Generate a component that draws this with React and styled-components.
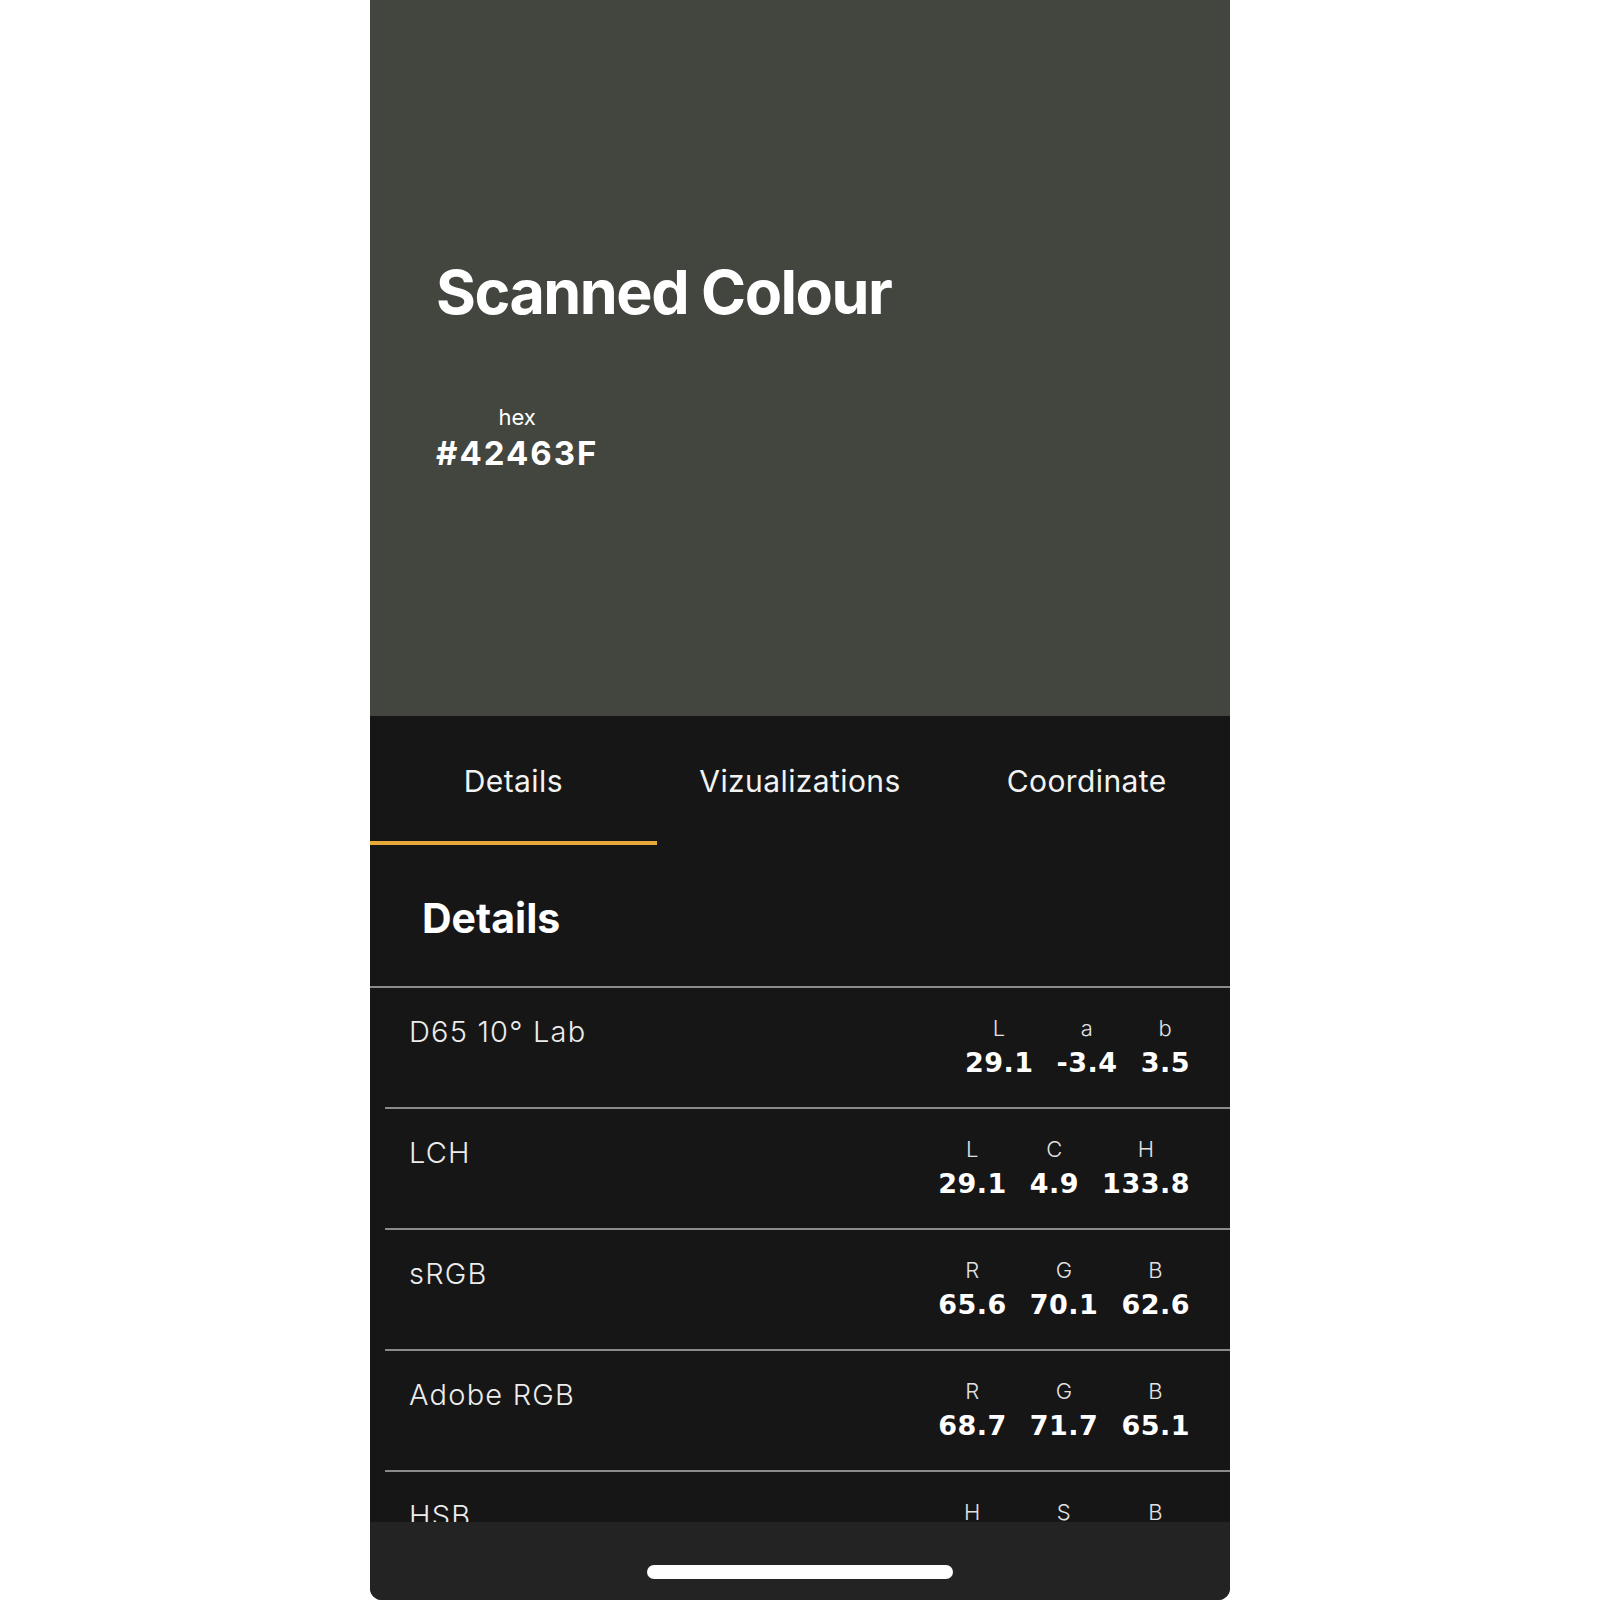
import React from "react";
import styled, { createGlobalStyle } from "styled-components";

const GlobalStyle = createGlobalStyle`
  html, body {
    margin: 0;
    padding: 0;
    background: #ffffff;
  }
  body {
    font-family: Inter, "Noto Sans", sans-serif;
    -webkit-font-smoothing: antialiased;
  }
`;

const Phone = styled.div`
  width: 860px;
  height: 1600px;
  margin: 0 auto;
  display: flex;
  flex-direction: column;
  background: #161616;
  border-radius: 0 0 12px 12px;
  overflow: hidden;
`;

const Swatch = styled.div`
  height: 716px;
  flex-shrink: 0;
  background: ${(p) => p.$colour};
  padding: 0 0 0 66px;
  box-sizing: border-box;
  display: flex;
  flex-direction: column;
  color: #ffffff;
`;

const Title = styled.h1`
  margin: 254px 0 0;
  font-size: 61px;
  font-weight: 700;
  letter-spacing: -1.5px;
  line-height: 76px;
`;

const HexBlock = styled.div`
  margin-top: 74px;
  display: flex;
  flex-direction: column;
  align-items: center;
  align-self: flex-start;
`;

const HexLabel = styled.span`
  font-size: 22px;
  font-weight: 400;
  line-height: 26px;
`;

const HexValue = styled.span`
  margin-top: 4px;
  font-size: 33px;
  font-weight: 700;
  line-height: 38px;
  letter-spacing: 2px;
`;

const Tabs = styled.div`
  display: grid;
  grid-template-columns: repeat(3, 1fr);
  height: 129px;
  flex-shrink: 0;
`;

const Tab = styled.div`
  display: flex;
  align-items: center;
  justify-content: center;
  color: #f2f2f2;
  font-size: 30px;
  font-weight: 400;
  letter-spacing: 0.4px;
  box-sizing: border-box;
  padding-top: 4px;
  border-bottom: 4px solid ${(p) => (p.$active ? "#e8a93a" : "transparent")};
`;

const SectionHead = styled.div`
  height: 143px;
  flex-shrink: 0;
  display: flex;
  align-items: center;
  padding: 4px 0 0 52px;
  box-sizing: border-box;
  border-bottom: 2px solid #8a8a8a;
  color: #ffffff;
  font-size: 41px;
  font-weight: 700;
`;

const List = styled.div`
  flex: 1;
  min-height: 0;
  overflow: hidden;
`;

const Row = styled.div`
  height: 119px;
  margin-left: 15px;
  padding: 0 40px 0 24px;
  display: flex;
  justify-content: space-between;
  align-items: flex-start;
  border-bottom: 2px solid #8a8a8a;
`;

const RowName = styled.span`
  margin-top: 27px;
  color: #ececec;
  font-size: 29px;
  font-weight: 300;
  line-height: 34px;
  letter-spacing: 1.2px;
`;

const Values = styled.div`
  margin-top: 27px;
  display: flex;
  gap: 23px;
`;

const Value = styled.div`
  display: flex;
  flex-direction: column;
  align-items: center;
`;

const Axis = styled.span`
  color: #e2e2e2;
  font-size: 22px;
  font-weight: 300;
  line-height: 26px;
  letter-spacing: 0.5px;
`;

const Number = styled.span`
  margin-top: 7px;
  color: #ffffff;
  font-family: "DejaVu Sans", Verdana, sans-serif;
  font-size: 27px;
  font-weight: 700;
  line-height: 30px;
  letter-spacing: 0.5px;
`;

const HomeBar = styled.div`
  height: 78px;
  flex-shrink: 0;
  background: #232323;
  display: flex;
  align-items: flex-end;
  justify-content: center;
  padding-bottom: 21px;
  box-sizing: border-box;
`;

const Indicator = styled.div`
  width: 306px;
  height: 14px;
  border-radius: 7px;
  background: #ffffff;
`;

const rows = [
  { name: "D65 10° Lab", axes: ["L", "a", "b"], values: ["29.1", "-3.4", "3.5"] },
  { name: "LCH", axes: ["L", "C", "H"], values: ["29.1", "4.9", "133.8"] },
  { name: "sRGB", axes: ["R", "G", "B"], values: ["65.6", "70.1", "62.6"] },
  { name: "Adobe RGB", axes: ["R", "G", "B"], values: ["68.7", "71.7", "65.1"] },
  { name: "HSB", axes: ["H", "S", "B"], values: ["94.3", "10.0", "27.5"] },
];

const App = () => {
  return (
    <>
      <GlobalStyle />
      <Phone>
        <Swatch $colour="#42463F">
          <Title>Scanned Colour</Title>
          <HexBlock>
            <HexLabel>hex</HexLabel>
            <HexValue>#42463F</HexValue>
          </HexBlock>
        </Swatch>
        <Tabs>
          <Tab $active>Details</Tab>
          <Tab>Vizualizations</Tab>
          <Tab>Coordinate</Tab>
        </Tabs>
        <SectionHead>Details</SectionHead>
        <List>
          {rows.map((row) => (
            <Row key={row.name}>
              <RowName>{row.name}</RowName>
              <Values>
                {row.axes.map((axis, i) => (
                  <Value key={axis + i}>
                    <Axis>{axis}</Axis>
                    <Number>{row.values[i]}</Number>
                  </Value>
                ))}
              </Values>
            </Row>
          ))}
        </List>
        <HomeBar>
          <Indicator />
        </HomeBar>
      </Phone>
    </>
  );
};

export default App;
